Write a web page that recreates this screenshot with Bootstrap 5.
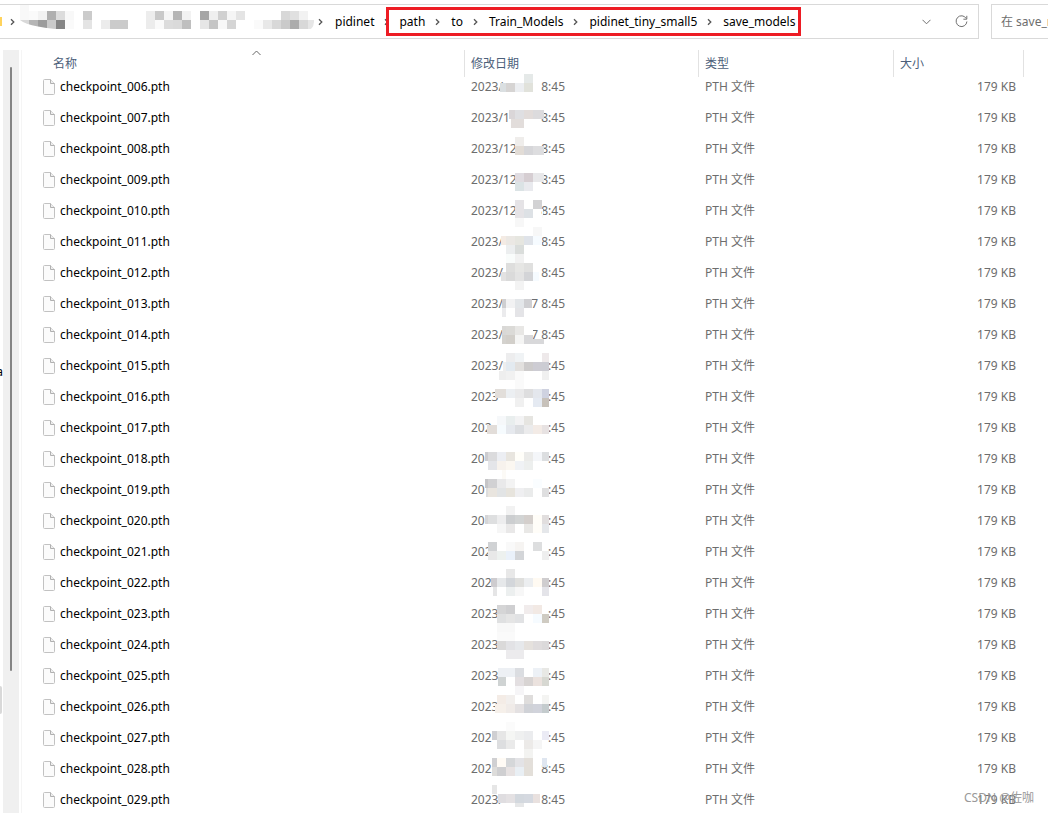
<!DOCTYPE html>
<html lang="zh-CN">
<head>
<meta charset="utf-8">
<meta name="viewport" content="width=device-width, initial-scale=1">
<title>save_models</title>
<link href="https://cdn.jsdelivr.net/npm/bootstrap@5.3.0/dist/css/bootstrap.min.css" rel="stylesheet">
<style>
  body { font: 12px/16px "Noto Sans", "Noto Sans CJK SC", sans-serif; color: #000; background: #fff; }
  svg { display: block; flex: none; }
  .top-row { padding-top: 4px; height: 39px; gap: 12px; }
  .address { border: 1px solid #d9d9d9; border-left: 0; padding-right: 10px; }
  .crumbs a { color: #000; text-decoration: none; white-space: nowrap; }
  .crumbs { height: 33px; }
  .folder-edge { width: 2px; height: 9px; background: #ffd35c; }
  .crumb-sep { margin: 0 11px 0 10px; }
  .redacted-path { width: 295px; height: 33px; }
  .marked { border: 3px solid #ed1c24; height: 29px; margin-left: -14px; padding: 0 3px 0 10px; }
  .tool { border: 0; background: none; padding: 0; color: #707070; }
  .find-box { width: 57px; border: 1px solid #d9d9d9; border-right: 0; padding: 0 0 0 9px; border-radius: 0; outline: 0; color: #6d6d6d; }
  .find-box::placeholder { color: #6d6d6d; opacity: 1; }
  .lower { padding-top: 11px; }
  .side-sliver { width: 3px; }
  .side-letter { top: 314px; right: 0; }
  .side-mark { top: 636px; left: 0; width: 2px; height: 28px; background: #d9d9d9; border-radius: 0 2px 2px 0; }
  .scroll-track { width: 16px; background: #f0f0f0; padding: 17px 7px 0 7px; }
  .scroll-thumb { height: 81%; background: #858585; border-radius: 1px; width: 2px; }
  .list-pane { margin-left: 2px; border-left: 1px solid #f5f5f5; padding-right: 24px; }
  .files { table-layout: fixed; width: 100%; border-collapse: separate; border-spacing: 0; }
  .files th { height: 21px; padding: 0; position: relative; font-weight: 400; vertical-align: top; }
  .files th::after { content: ""; position: absolute; top: 0; right: 0; width: 1px; height: 27px; background: #e2e2e2; }
  .files th button { border: 0; background: none; padding: 6px 0 0 6px; color: #4c607a; line-height: 15px; display: block; }
  .files th:first-child button { padding-left: 31px; }
  .files td { height: 31px; padding: 0 0 0 6px; color: #6d6d6d; position: relative; }
  .files td.fname { padding-left: 21px; color: #000; }
  .files td.fsize { padding-right: 8px; text-align: right; }
  .col-date { width: 234px; } .col-kind { width: 195px; } .col-size { width: 130px; }
  .fname span { margin-left: 5px; }
  .stamp { width: 94px; }
  .mosaic { position: absolute; left: 0; top: 0; overflow: visible; }
  .sort-mark { position: absolute; top: 0; left: 52%; }
  .watermark { right: 14px; bottom: 7px; color: #999; }
</style>
</head>
<body>
<svg width="0" height="0" class="position-absolute" aria-hidden="true">
  <symbol id="chev" viewBox="0 0 5 8"><path d="M1 1.2 3.8 4 1 6.8" fill="none" stroke="#555" stroke-width="1.3"/></symbol>
  <symbol id="doc" viewBox="0 0 12 16"><path d="M1.5.5h6l4 4v10q0 1-1 1h-9q-1 0-1-1v-13q0-1 1-1z" fill="#fbfbfb" stroke="#c2c2c2"/><path d="M7.5.5v4h4" fill="#eee" stroke="#b0b0b0"/></symbol>
</svg>
<div class="vh-100 overflow-hidden d-flex flex-column position-relative">
  <header class="top-row d-flex flex-shrink-0">
    <div class="address d-flex flex-grow-1 align-items-center">
      <nav class="crumbs d-flex align-items-center flex-grow-1" aria-label="路径">
        <span class="folder-edge"></span>
        <svg class="ms-2" width="5" height="8"><use href="#chev"/></svg>
        <svg class="redacted-path ms-1" id="pathMosaic" viewBox="19 5 295 33"><clipPath id="brush"><path d="M20 5h285q10 6 9 17t-12 8H72Q30 28 20 20z"/></clipPath><g clip-path="url(#brush)"></g></svg>
        <svg class="ms-1" width="5" height="8"><use href="#chev"/></svg>
        <a href="#" class="ps-2 ms-1">pidinet</a>
        <svg class="crumb-sep" width="5" height="8"><use href="#chev"/></svg>
        <div class="marked d-flex align-items-center bg-white position-relative">
          <a href="#">path</a><svg class="crumb-sep" width="5" height="8"><use href="#chev"/></svg>
          <a href="#">to</a><svg class="crumb-sep" width="5" height="8"><use href="#chev"/></svg>
          <a href="#">Train_Models</a><svg class="crumb-sep" width="5" height="8"><use href="#chev"/></svg>
          <a href="#">pidinet_tiny_small5</a><svg class="crumb-sep" width="5" height="8"><use href="#chev"/></svg>
          <a href="#">save_models</a>
        </div>
      </nav>
      <button class="tool me-4" type="button" aria-label="展开"><svg width="9" height="6" viewBox="0 0 9 6"><path d="M.5.8 4.5 4.8 8.5.8" fill="none" stroke="currentColor"/></svg></button>
      <button class="tool" type="button" aria-label="刷新"><svg width="13" height="13" viewBox="0 0 13 13"><path d="M11.2 3.5A5.4 5.4 0 1 0 11.9 6.5M11.8.8v3.4H8.4" fill="none" stroke="currentColor"/></svg></button>
    </div>
    <input class="find-box" type="text" placeholder="在 save_models 中搜索" aria-label="搜索">
  </header>
  <main class="lower d-flex flex-grow-1 overflow-hidden">
    <div class="side-sliver flex-shrink-0 position-relative overflow-hidden"><span class="position-absolute side-letter">a</span><span class="position-absolute side-mark"></span></div>
    <div class="scroll-track flex-shrink-0"><div class="scroll-thumb"></div></div>
    <div class="list-pane flex-grow-1">
      <table class="files">
        <colgroup><col><col class="col-date"><col class="col-kind"><col class="col-size"></colgroup>
        <thead><tr>
          <th><button type="button">名称</button><svg class="sort-mark" width="9" height="6" viewBox="0 0 9 6"><path d="M.5 5 4.5 1 8.5 5" fill="none" stroke="#666"/></svg></th>
          <th><button type="button">修改日期</button></th><th><button type="button">类型</button></th><th><button type="button">大小</button></th>
        </tr></thead>
        <tbody id="rows"></tbody>
      </table>
    </div>
  </main>
  <div class="watermark position-absolute">CSDN @佐咖</div>
</div>
<script src="https://cdn.jsdelivr.net/npm/bootstrap@5.3.0/dist/js/bootstrap.bundle.min.js"></script>
<script>
  // A strip is [y, first x, colours]; tiles are 9px wide, "-" leaves a gap.
  function tiles(strips, end) {
    return strips.map(([y, x0, list, h]) => {
      let x = x0, out = '';
      for (const c of list.split(' ')) {
        const next = Math.min(2 + 9 * (Math.floor((x - 2) / 9) + 1), end);
        if (c !== '-') out += `<rect x="${x}" y="${y}" width="${next - x}" height="${h || 9}" fill="#${c}"/>`;
        x = next;
      }
      return out;
    }).join('');
  }
  document.querySelector('#pathMosaic g').innerHTML = tiles([
    [5, 20, 'f8f8f8', 6],
    [11, 20, 'f8f8f8 fafafa f2f2f2 afafaf dcdcdc f8f8f8 - cbcbcb - - - - - - ededed c9c9c9 f5f5f5 b5b5b5 f2f2f2 - a6a6a6 efefef d0d0d0 f5f5f5 e4e4e4 - - - - d8d8d8 e0e0e0 f2f2f2'],
    [20, 20, 'd8d8d8 b5b5b5 9c9c9c cacaca 858585 fafafa - e4e4e4 - ececec cbcbcb cbcbcb - - ececec fafafa dcdcdc dadada bfbfbf - e6e6e6 c5c5c5 f8f8f8 d5d5d5 - - fafafa e8e8e8 d8d8d8 cacaca acacac d8d8d8 e6e6e6']
  ], 315);

  const rows = [
    ['2023/', '8:45', [[74, 524, 'e5e9e8'], [83, 500, 'dadfe1 d6d4d3 eceef1 e1e2db']]],
    ['2023/1', '8:45', [[110, 509, 'dad6d8 dfdfe2 e2dcda dcdbdd dbdbdd'], [119, 511, 'e2dddb e2dddb']], 544],
    ['2023/12', '8:45', [[137, 515, 'efedeb'], [146, 515, 'e2dcd6 d6d6d9 dddddf dddddf']], 544],
    ['2023/12', '8:45', [[173, 515, 'e0dce1 d6ced2 e8e8ea e8e8ea'], [182, 515, 'dbe3e5 e9eaee']], 544],
    ['2023/12', '8:45', [[200, 515, 'e5e3e6 - d2d2d4'], [209, 515, 'e5e3e6 dde1e5 - fafafa'], [218, 515, 'f7f7f7']], 543],
    ['2023/', '8:45', [[227, 533, 'f7f7f7'], [236, 501, 'f4ebe4 ebe8e4 e6e6e0 dfe3e9 f6fbff'], [245, 506, 'eceeef dadddb'], [254, 506, 'f9fcfb f1f1f1']]],
    ['2023/', '8:45', [[263, 506, 'dededd e6e6e4 e0e0df'], [272, 501, 'e3e2e2 dadada e3e3e3 d3d4d7 f6fbff'], [281, 515, 'f3f3f3']], 539],
    ['2023/', '7 8:45', [[299, 502, 'cfcfd1 f2f2f3 e3e6e9 cfcfd2'], [308, 502, 'ebebed - e4e4e7']], 532],
    ['2023/', '27 8:45', [[326, 502, 'd9d8d6 dbdad7 e8e7e5 ffffff', 9], [335, 502, 'd4d2ce d2cfca f5f5f4 d8d8da'], [339, 533, 'd8d8da d8d8da', 5]], 544],
    ['2023/', ':45', [[353, 506, 'ededee f0f3f5 - - eee9ea'], [362, 503, 'eeeeee e3eaf0 e2e0de cdcbcb cdccd3 ccccd3'], [371, 499, 'eeeeee f1f1f1 fafafa - - f0f0f0']]],
    ['2023', ':45', [[380, 515, 'fafafa'], [389, 495, 'e2deda e2deda eceff2 eaeaeb dededf e4e7ed cfd2e0'], [398, 515, 'f0f0f0 - e5eaf2 c7c1ba']]],
    ['202', ':45', [[416, 497, 'f6f8fa e9eeee f3f3f4 e6e5e1'], [425, 487, 'e2ddd9 e2ddd9 f6fbfe e6e9ee dcdee1 ebebec f3ebe6 e7e2e2']]],
    ['20', ':45', [[452, 485, 'ccccd0 dbdbdd eceef3 e8e5df fffef9 ebebe9 f4f6f9 dcdee0'], [461, 488, 'e4e5e9 f7f2ed fbf7f1 f0f2f5 edefee'], [470, 502, 'fcfaf6']]],
    ['20', ':45', [[479, 485, 'c5c5c7 d1d1d3 e9e9ea f3f3f3 - - fafdff'], [488, 486, 'dddddd e9e5df e2e4e5 e7e4dd efeff1 eaebeb - dfdfe0']]],
    ['20', ':45', [[506, 506, 'f2f2f2'], [515, 485, 'd5d5d7 dedfe0 ededee ccced0 d2d4d4 d4cfcc fffdf8 e1dede'], [524, 497, 'f6f6f6 e9e8e8 - e9e8e6 fffdf8 e5e7ea']]],
    ['202', ':45', [[542, 488, 'd0d2d4 - f9f9f9 f6f4f2 - dddedf'], [551, 488, 'e8e8e8 edf1ef eaf1fa d3d5d8 - - eeeeee']]],
    ['202', ':45', [[569, 506, 'e8e8e8'], [578, 491, 'cecccf e6e8ea d3d6da dfdfdd eceef0 fffaf2 cfcdcf'], [587, 493, 'e5e5e6 - ecefef f7f7f7 - - e4e4e9']]],
    ['2023', ':45', [[605, 497, 'd5d5d6 cfcfd1 - f1ecec f2e9e4'], [614, 497, 'dfe0e1 e5e5e5 e1e2e4 - f6fbff cfcbc2'], [623, 497, 'f8f8f8 f8f8f8']]],
    ['2023', ':45', [[632, 497, 'fafafa fafafa'], [641, 497, 'dad9d9 e2e2e5 e6e8eb e5e1dd dfdcdd dbd9da'], [650, 506, 'ecebed ecebed']]],
    ['2023', ':45', [[668, 498, 'edf0f4 edf0f4 dbdde1 - edf1f6 e8e8e5'], [677, 498, 'cfd3d3 - e3dfe1 d8d4d3 ebe2de d7d8d2'], [686, 515, 'f6f5f7']]],
    ['2023', ':45', [[695, 497, 'f4ece6 f2efed - dfdddc - f4f4f2'], [704, 495, 'f6f0ea f6f0ea f0ebe8 e4e1e2 d0d2d7 d1d3db c4cbcd']]],
    ['202', ':45', [[722, 506, 'fbfbfb'], [731, 492, 'cfcfd2 e6e6e6 f5f6f4 eff0f0 ebecee - ebebf5'], [740, 497, 'dddee0 eaeaea - eceae8 f5f5f5'], [749, 524, 'f3f3f1']]],
    ['202', '8:45', [[758, 492, 'd0d0d2 fffbf5 d5d7d9 e3e3e6 e3dfda - dfe6f0'], [767, 492, 'dddcda cfcfd1 e7e2e2 e9eff4 e3dfd9']], 547],
    ['2023/', '8:45', [[785, 492, 'e6e6e6'], [794, 498, 'dfdde0 e4e1e3 d3d8de d5d9e0 e9e1df'], [803, 515, 'e6e7e8', 4]], 540]
  ];
  document.getElementById('rows').innerHTML = rows.map(([left, right, strips, end], i) => `
    <tr>
      <td class="fname"><div class="d-flex align-items-center"><svg width="12" height="16"><use href="#doc"/></svg><span>checkpoint_${String(i + 6).padStart(3, '0')}.pth</span></div></td>
      <td><div class="stamp d-flex justify-content-between"><span>${left}</span><span>${right}</span></div>
        <svg class="mosaic" width="90" height="31" viewBox="465 ${71 + 31 * i} 90 31" aria-hidden="true">${tiles(strips, end || 549)}</svg></td>
      <td>PTH 文件</td>
      <td class="fsize">179 KB</td>
    </tr>`).join('');
</script>
</body>
</html>
